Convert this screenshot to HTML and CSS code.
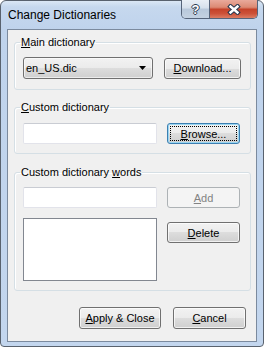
FILE: index.html
```html
<!DOCTYPE html>
<html lang="en">
  <head>
    <meta charset="UTF-8" />
    <title>Change Dictionaries</title>
    <link rel="stylesheet" href="styles.css">
  </head>
  <body>
    <div class="window">
      <div class="titlebar">
        <span class="title">Change Dictionaries</span>
        <div class="caption-buttons">
          <span class="cap-btn help">?</span>
          <span class="cap-btn close">
            <svg width="14" height="11" viewBox="0 0 14 11">
              <path d="M3.5 2.5 L10.5 8.5 M10.5 2.5 L3.5 8.5" stroke="#2b3a4f" stroke-width="4.6" stroke-linecap="square" fill="none" />
              <path d="M3.5 2.5 L10.5 8.5 M10.5 2.5 L3.5 8.5" stroke="#ffffff" stroke-width="2.4" stroke-linecap="square" fill="none" />
            </svg>
          </span>
        </div>
      </div>

      <div class="client">
        <fieldset class="group group-main">
          <legend><u>M</u>ain dictionary</legend>
          <div class="row row-main">
            <div class="combo">
              <span>en_US.dic</span>
              <svg width="7" height="4" viewBox="0 0 7 4"><path d="M0 0 H7 L3.5 4 Z" fill="#000" /></svg>
            </div>
            <button class="btn btn-download"><u>D</u>ownload...</button>
          </div>
        </fieldset>

        <fieldset class="group group-custom">
          <legend><u>C</u>ustom dictionary</legend>
          <div class="row">
            <input type="text" class="textbox" />
            <button class="btn btn-focused"><u>B</u>rowse...</button>
          </div>
        </fieldset>

        <fieldset class="group group-words">
          <legend>Custom dictionary <u>w</u>ords</legend>
          <div class="words-grid">
            <input type="text" class="textbox" />
            <button class="btn" disabled><u>A</u>dd</button>
            <div class="listbox"></div>
            <button class="btn btn-delete"><u>D</u>elete</button>
          </div>
        </fieldset>

        <div class="actions">
          <button class="btn btn-apply"><u>A</u>pply &amp; Close</button>
          <button class="btn btn-cancel"><u>C</u>ancel</button>
        </div>
      </div>
    </div>
  </body>
</html>
```

FILE: styles.css
```css
body {
  margin: 0;
  background-color: #ffffff;
  font-family: "Liberation Sans", Arial, sans-serif;
  font-size: 11px;
  color: #000;
}

.window {
  width: 264px;
  height: 347px;
  box-sizing: border-box;
  display: flex;
  flex-direction: column;
  border: 1px solid #59626e;
  border-radius: 6px 6px 4px 4px;
  background: linear-gradient(#dbe7f5 0, #c6d8ee 6px, #bfd3ec 28px, #c3d6ee 100%);
}

/* title bar */
.titlebar {
  height: 28px;
  display: flex;
  justify-content: space-between;
  align-items: flex-start;
  padding: 0 5px 0 7px;
}

.title {
  font-size: 12px;
  line-height: 14px;
  padding-top: 7px;
}

.caption-buttons {
  display: flex;
  margin-top: -1px;
  height: 18px;
  border: 1px solid #56647a;
  border-top: none;
  border-radius: 0 0 5px 5px;
  overflow: hidden;
}

.cap-btn {
  display: flex;
  align-items: center;
  justify-content: center;
  height: 18px;
}

.help {
  width: 27px;
  border-right: 1px solid #56647a;
  background: linear-gradient(#e9eff6 0, #d6e0ec 45%, #b8c8db 50%, #c4d2e2 100%);
  color: #fff;
  font-weight: bold;
  font-size: 13px;
  text-shadow: 1px 0 0 #2d3b50, -1px 0 0 #2d3b50, 0 1px 0 #2d3b50, 0 -1px 0 #2d3b50;
}

.close {
  width: 47px;
  background: linear-gradient(#e9aa9b 0, #dc8a74 40%, #c5432a 52%, #cc5138 75%, #dc7c62 100%);
}

/* client area */
.client {
  flex: 1;
  display: flex;
  flex-direction: column;
  margin: 0 6px 4px 6px;
  padding: 5px 5px 0 6px;
  border: 1px solid #7b8a9e;
  background-color: #f0f0f0;
}

.group {
  margin: 0;
  min-inline-size: 0;
  padding: 8px 9px 9px 8px;
  border: 1px solid #d5dfe5;
  border-radius: 3px;
  box-shadow: inset 1px 1px 0 #ffffff;
}

.group legend {
  padding: 0 1px;
  margin-left: -3px;
  line-height: 14px;
}

.group-main {
  padding-bottom: 10px;
}

.group-custom {
  margin-top: 10px;
  padding-top: 9px;
}

.group-words {
  margin-top: 11px;
}

.row {
  display: flex;
  align-items: center;
  gap: 10px;
}
.row-main {
  gap: 11px;
}

.combo {
  width: 130px;
  height: 22px;
  box-sizing: border-box;
  display: flex;
  align-items: center;
  justify-content: space-between;
  padding: 0 6px 0 2px;
  border: 1px solid #707070;
  border-radius: 3px;
  background: linear-gradient(#f2f2f2 0, #ebebeb 50%, #dddddd 50%, #cfcfcf 100%);
  box-shadow: inset 0 0 0 1px rgba(255, 255, 255, 0.6);
}

.textbox {
  width: 134px;
  height: 21px;
  box-sizing: border-box;
  margin: 0;
  padding: 0;
  border: 1px solid #e2e3ea;
  border-top-color: #c9ccd3;
  border-radius: 2px;
  background-color: #fff;
}

.listbox {
  width: 134px;
  height: 63px;
  box-sizing: border-box;
  border: 1px solid #828790;
  background-color: #fff;
}

.words-grid {
  display: grid;
  grid-template-columns: 134px 73px;
  column-gap: 10px;
  row-gap: 10px;
  align-items: start;
}

/* buttons */
.btn {
  width: 73px;
  height: 21px;
  box-sizing: border-box;
  margin: 0;
  padding: 0;
  font-family: inherit;
  font-size: 11px;
  color: #000;
  border: 1px solid #707070;
  border-radius: 3px;
  background: linear-gradient(#f2f2f2 0, #ebebeb 50%, #dddddd 50%, #cfcfcf 100%);
  box-shadow: inset 0 0 0 1px rgba(255, 255, 255, 0.7);
}

.btn-download {
  width: 77px;
}

.btn-focused {
  border-color: #3c7fb1;
  box-shadow: inset 0 0 0 1px #9ad6f2;
  outline: 1px dotted #000;
  outline-offset: -4px;
}

.btn:disabled {
  color: #838383;
  border-color: #adb2b5;
  background: #f4f4f4;
  box-shadow: none;
}

.btn-delete {
  margin-top: 4px;
}

.actions {
  display: flex;
  justify-content: flex-end;
  gap: 12px;
  margin-top: 16px;
  margin-right: 5px;
}

.btn-apply {
  width: 82px;
  height: 22px;
}
.btn-cancel {
  height: 22px;
}
```
